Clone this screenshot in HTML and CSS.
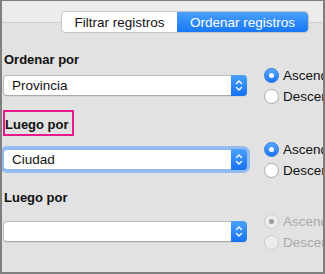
FILE: index.html
```html
<!DOCTYPE html>
<html lang="es">
<head>
    <meta charset="UTF-8">
    <meta name="viewport" content="width=device-width, initial-scale=1.0">
    <title>Ordenar registros</title>
    <link rel="stylesheet" href="styles.css">
</head>
<body>
    <div class="ventana">
        <div class="barra">
            <div class="pestanas">
                <span class="pestana">Filtrar registros</span>
                <span class="pestana activa">Ordenar registros</span>
            </div>
        </div>

        <div class="etiqueta primera">Ordenar por</div>
        <div class="fila fila-1">
            <div class="lista">
                <span class="lista-texto">Provincia</span>
                <span class="lista-boton">
                    <svg width="16" height="21" viewBox="0 0 16 21"><path d="M5.5 8.5 L8 6 L10.5 8.5 M5.5 12.5 L8 15 L10.5 12.5" fill="none" stroke="#fff" stroke-width="1.4" stroke-linecap="round" stroke-linejoin="round"/></svg>
                </span>
            </div>
            <div class="opciones">
                <label class="opcion"><span class="radio marcado"></span>Ascendente</label>
                <label class="opcion"><span class="radio"></span>Descendente</label>
            </div>
        </div>

        <div class="marca"><span class="etiqueta">Luego por</span></div>
        <div class="fila fila-2">
            <div class="lista enfocada">
                <span class="lista-texto">Ciudad</span>
                <span class="lista-boton">
                    <svg width="16" height="21" viewBox="0 0 16 21"><path d="M5.5 8.5 L8 6 L10.5 8.5 M5.5 12.5 L8 15 L10.5 12.5" fill="none" stroke="#fff" stroke-width="1.4" stroke-linecap="round" stroke-linejoin="round"/></svg>
                </span>
            </div>
            <div class="opciones">
                <label class="opcion"><span class="radio marcado"></span>Ascendente</label>
                <label class="opcion"><span class="radio"></span>Descendente</label>
            </div>
        </div>

        <div class="etiqueta tercera">Luego por</div>
        <div class="fila fila-3">
            <div class="lista">
                <span class="lista-texto"></span>
                <span class="lista-boton">
                    <svg width="16" height="21" viewBox="0 0 16 21"><path d="M5.5 8.5 L8 6 L10.5 8.5 M5.5 12.5 L8 15 L10.5 12.5" fill="none" stroke="#fff" stroke-width="1.4" stroke-linecap="round" stroke-linejoin="round"/></svg>
                </span>
            </div>
            <div class="opciones inactivas">
                <label class="opcion"><span class="radio marcado"></span>Ascendente</label>
                <label class="opcion"><span class="radio"></span>Descendente</label>
            </div>
        </div>
    </div>
</body>
</html>
```

FILE: styles.css
```css
body {
    margin: 0;
    font-family: "Liberation Sans", Arial, sans-serif;
    color: #111;
}
.ventana {
    width: 321px;
    height: 271px;
    border: 2px solid #7f7f7f;
    border-top-width: 1px;
    background-color: #e2e2e2;
    overflow: hidden;
}
.barra {
    height: 31px;
    padding-left: 60px;
    background: linear-gradient(#ececec 0, #ececec 21px, #cdcdcd 21px, #cdcdcd 22px, #e2e2e2 22px);
    display: flex;
    align-items: flex-end;
}
.pestanas {
    display: flex;
    height: 20px;
    border-radius: 4px;
    box-shadow: 0 0 0 1px #c4c4c4, 0 1px 1px rgba(0, 0, 0, 0.15);
    background-color: #fff;
    font-size: 13.5px;
}
.pestana {
    box-sizing: border-box;
    display: flex;
    align-items: center;
    justify-content: center;
    width: 115px;
    white-space: nowrap;
    color: #111;
}
.pestana.activa {
    width: 131px;
    color: #fff;
    border-radius: 0 4px 4px 0;
    background: linear-gradient(#4aa0fd, #1877f5);
}
.etiqueta {
    font-size: 13px;
    font-weight: bold;
    line-height: 16px;
    padding-left: 2px;
}
.primera {
    margin-top: 20px;
}
.marca {
    margin-top: 3px;
    margin-left: 1px;
}
.marca .etiqueta {
    display: inline-block;
    border: 2px solid #e8198b;
    padding: 5px 3px 1px 0;
}
.tercera {
    margin-top: 9px;
}
.fila {
    display: flex;
    align-items: flex-start;
    padding-left: 1px;
}
.fila-1 {
    margin-top: -3px;
}
.fila-2 {
    margin-top: 3px;
}
.fila-3 {
    margin-top: 5px;
}
.lista {
    box-sizing: border-box;
    flex-shrink: 0;
    width: 244px;
    height: 21px;
    margin-top: 10px;
    display: flex;
    background-color: #fff;
    border: 1px solid #bcbcbc;
    border-bottom-color: #a9a9a9;
    border-right: none;
    border-radius: 4px;
    box-shadow: 0 1px 0 rgba(0, 0, 0, 0.05);
}
.lista.enfocada {
    box-shadow: 0 0 0 3px #93bdf2;
    border-color: #8fb6ea;
}
.lista-texto {
    flex: 1;
    font-size: 13.5px;
    line-height: 19px;
    padding-left: 8px;
}
.lista-boton {
    width: 16px;
    height: 21px;
    margin-top: -1px;
    border-radius: 0 4px 4px 0;
    background: linear-gradient(#4aa0fd, #1672f2);
}
.lista-boton svg {
    display: block;
}
.opciones {
    flex-shrink: 0;
    margin-left: 17px;
    display: flex;
    flex-direction: column;
}
.opcion {
    display: flex;
    align-items: center;
    gap: 4px;
    height: 21px;
    font-size: 13.5px;
    white-space: nowrap;
    color: #111;
}
.radio {
    box-sizing: border-box;
    width: 15px;
    height: 15px;
    border-radius: 50%;
    background-color: #fff;
    border: 1px solid #a8a8a8;
    display: flex;
    align-items: center;
    justify-content: center;
}
.radio.marcado {
    border-color: #2c7ce8;
    background: linear-gradient(#5aa8fd, #1a74f2);
}
.radio.marcado::after {
    content: "";
    width: 5px;
    height: 5px;
    border-radius: 50%;
    background-color: #fff;
}
.inactivas .opcion {
    color: #a9a9a9;
}
.inactivas .radio {
    background: #ececec;
    border-color: #cacaca;
}
.inactivas .radio.marcado::after {
    background-color: #9d9d9d;
}
```
